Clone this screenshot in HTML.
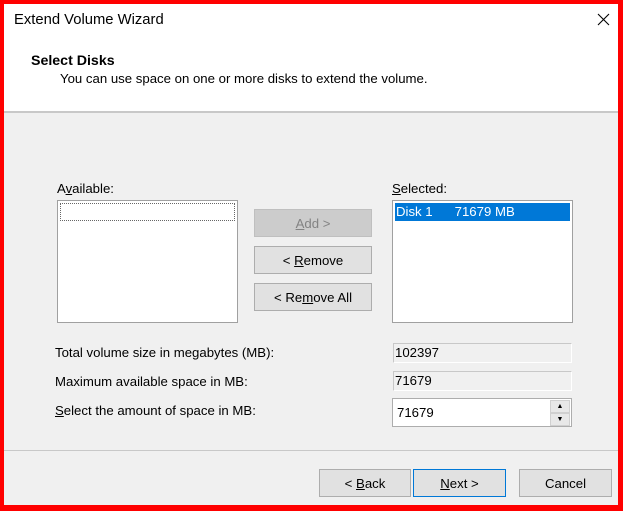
<!DOCTYPE html>
<html><head><style>
*{box-sizing:border-box;margin:0;padding:0}
body{width:623px;height:511px;overflow:hidden;background:#f00;font-family:"Liberation Sans",sans-serif;font-size:13.2px;color:#000;position:relative}
.win{position:absolute;left:4px;top:4px;width:614px;height:501px;background:#f0f0f0}
.hdr{position:absolute;left:0;top:0;width:614px;height:109px;background:#fff;border-bottom:2px solid #c8c8c8}
.a{position:absolute;white-space:nowrap}
.box{position:absolute;background:#fff;border:1px solid #a0a0a0}
.btn{position:absolute;background:#e1e1e1;border:1px solid #adadad;text-align:center;line-height:28px}
.fld{position:absolute;background:#f0f0f0;border:1px solid #c8c8c8;border-right-color:#fff;border-bottom-color:#fff;padding-left:1px;line-height:18px}
u{text-decoration:underline}
</style></head><body>
<div class="win">
<div class="hdr">
<div class="a" style="left:10px;top:8px;font-size:14.8px">Extend Volume Wizard</div>
<svg class="a" style="left:593px;top:9px" width="13" height="13"><path d="M1 1L12 12M12 1L1 12" stroke="#000" stroke-width="1.1"/></svg>
<div class="a" style="left:27px;top:49px;font-weight:bold;font-size:14.2px">Select Disks</div>
<div class="a" style="left:56px;top:67px">You can use space on one or more disks to extend the volume.</div>
</div>
<div class="a" style="left:53px;top:177px">A<u>v</u>ailable:</div>
<div class="box" style="left:53px;top:196px;width:181px;height:123px"><div style="position:absolute;left:2px;top:2px;width:175px;height:18px;border:1px dotted #666"></div></div>
<div class="btn" style="left:250px;top:205px;width:118px;height:28px;background:#ccc;border-color:#bfbfbf;color:#838383"><u>A</u>dd &gt;</div>
<div class="btn" style="left:250px;top:242px;width:118px;height:28px">&lt; <u>R</u>emove</div>
<div class="btn" style="left:250px;top:279px;width:118px;height:28px">&lt; Re<u>m</u>ove All</div>
<div class="a" style="left:388px;top:177px"><u>S</u>elected:</div>
<div class="box" style="left:388px;top:196px;width:181px;height:123px"><div style="position:absolute;left:2px;top:2px;width:175px;height:18px;background:#0078d7;color:#fff;line-height:18px;padding-left:1px">Disk 1&nbsp;&nbsp;&nbsp;&nbsp;&nbsp;&nbsp;71679 MB</div></div>
<div class="a" style="left:51px;top:341px">Total volume size in megabytes (MB):</div>
<div class="fld" style="left:389px;top:339px;width:179px;height:20px">102397</div>
<div class="a" style="left:51px;top:370px">Maximum available space in MB:</div>
<div class="fld" style="left:389px;top:367px;width:179px;height:20px">71679</div>
<div class="a" style="left:51px;top:399px"><u>S</u>elect the amount of space in MB:</div>
<div class="box" style="left:388px;top:394px;width:180px;height:29px;border-color:#adadad;padding:6px 0 0 4px">71679
<div style="position:absolute;right:1px;top:1px;width:20px;height:13px;background:#e8e8e8;border:1px solid #d0d0d0;font-size:7px;text-align:center;line-height:11px">▲</div>
<div style="position:absolute;right:1px;top:14px;width:20px;height:13px;background:#e8e8e8;border:1px solid #d0d0d0;font-size:7px;text-align:center;line-height:11px">▼</div></div>
<div style="position:absolute;left:0;top:446px;width:614px;height:1px;background:#c8c8c8"></div>
<div class="btn" style="left:315px;top:465px;width:92px;height:28px">&lt; <u>B</u>ack</div>
<div class="btn" style="left:409px;top:465px;width:93px;height:28px;border:1px solid #0078d7"><u>N</u>ext &gt;</div>
<div class="btn" style="left:515px;top:465px;width:93px;height:28px">Cancel</div>
</div>
</body></html>
